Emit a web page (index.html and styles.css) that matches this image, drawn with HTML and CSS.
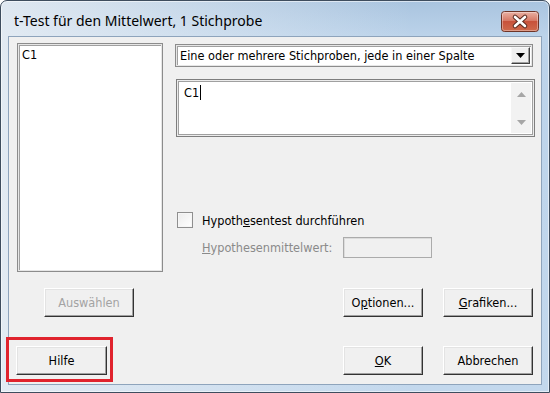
FILE: index.html
```html
<!DOCTYPE html>
<html lang="de">
<head>
<meta charset="utf-8">
<title>t-Test für den Mittelwert, 1 Stichprobe</title>
<link rel="stylesheet" href="styles.css">
</head>
<body>
<div class="window">
  <div class="titlebar">
    <span class="title">t-Test für den Mittelwert, 1 Stichprobe</span>
    <span class="close" aria-label="Schließen">
      <svg width="38" height="21" viewBox="0 0 38 21">
        <defs>
          <linearGradient id="cg" x1="0" y1="0" x2="0" y2="1">
            <stop offset="0" stop-color="#eab3a6"/>
            <stop offset="0.45" stop-color="#d77a66"/>
            <stop offset="0.5" stop-color="#c8523b"/>
            <stop offset="1" stop-color="#cf6b4d"/>
          </linearGradient>
        </defs>
        <rect x="0.5" y="0.5" width="37" height="20" rx="3" ry="3" fill="url(#cg)" stroke="#6e3427"/>
        <rect x="1.5" y="1.5" width="35" height="18" rx="2" ry="2" fill="none" stroke="rgba(255,255,255,0.35)"/>
        <path d="M14 6 L24 15 M24 6 L14 15" stroke="#5a2a20" stroke-width="4.6" stroke-linecap="round"/>
        <path d="M14 6 L24 15 M24 6 L14 15" stroke="#ffffff" stroke-width="2.6" stroke-linecap="round"/>
      </svg>
    </span>
  </div>
  <div class="client">
    <div class="main">
      <div class="listbox">C1</div>
      <div class="right">
        <div class="combo">
          <span class="combo-text">Eine oder mehrere Stichproben, jede in einer Spalte</span>
          <span class="combo-btn">
            <svg width="9" height="5" viewBox="0 0 9 5"><path d="M0 0 H9 L4.5 5 Z" fill="#000"/></svg>
          </span>
        </div>
        <div class="memo">
          <div class="memo-text">C1<span class="caret"></span></div>
          <div class="vscroll">
            <svg width="9" height="5" viewBox="0 0 9 5"><path d="M0 5 H9 L4.5 0 Z" fill="#a6a6a6"/></svg>
            <svg width="9" height="5" viewBox="0 0 9 5"><path d="M0 0 H9 L4.5 5 Z" fill="#a6a6a6"/></svg>
          </div>
        </div>
        <div class="check-row">
          <span class="checkbox"></span>
          <span class="check-label">Hypoth<u>e</u>sentest durchführen</span>
        </div>
        <div class="hyp-row">
          <span class="hyp-label"><u>H</u>ypothesenmittelwert:</span>
          <span class="hyp-input"></span>
        </div>
      </div>
    </div>
    <div class="btn-row row1">
      <span class="btn btn-sel disabled">Auswählen</span>
      <div class="btn-group">
        <span class="btn btn-opt">O<u>p</u>tionen...</span>
        <span class="btn btn-wide"><u>G</u>rafiken...</span>
      </div>
    </div>
    <div class="btn-row row2">
      <div class="hilfe-wrap">
        <span class="btn btn-hilfe">Hilfe</span>
      </div>
      <div class="btn-group">
        <span class="btn btn-opt"><u>O</u>K</span>
        <span class="btn btn-wide">Abbrechen</span>
      </div>
    </div>
  </div>
</div>
</body>
</html>
```
FILE: styles.css
```css
html, body {
  margin: 0;
  padding: 0;
  background: #ffffff;
}

.window {
  width: 550px;
  height: 393px;
  box-sizing: border-box;
  border: 1px solid #3e4d5e;
  border-radius: 7px 7px 0 0;
  background:
    linear-gradient(to right, rgba(232, 238, 244, 0.85) 0%, rgba(232, 238, 244, 0.35) 45%, rgba(232, 238, 244, 0) 75%),
    linear-gradient(to bottom, #a9c4df 0%, #bcd3ea 9%, #c3d8ed 100%);
  box-shadow: inset 0 0 0 1px rgba(255, 255, 255, 0.55);
  display: flex;
  flex-direction: column;
  overflow: hidden;
}

.titlebar {
  height: 35px;
  flex: 0 0 35px;
  display: flex;
  align-items: flex-start;
}

.title {
  font-family: "Noto Sans", "Open Sans", sans-serif;
  font-size: 14px;
  line-height: 20px;
  color: #000;
  padding: 10px 0 0 13px;
  white-space: nowrap;
}

.close {
  margin: 10px 10px 0 auto;
  width: 38px;
  height: 21px;
  display: block;
}
.close svg { display: block; }

.client {
  margin: 0 7px 0 7px;
  height: 349px;
  flex: 0 0 349px;
  box-sizing: border-box;
  border: 1px solid #8ea4bc;
  background: #f0f0f0;
  padding: 6px 8px 0 7px;
  font-family: "DejaVu Sans Condensed", "Liberation Sans", sans-serif;
  font-size: 12.6px;
  line-height: 15px;
  color: #000;
}

.main {
  display: flex;
  align-items: flex-start;
}

.listbox {
  margin-left: 1px;
  width: 146px;
  height: 229px;
  box-sizing: border-box;
  background: #fff;
  border: 1px solid #8c8c8c;
  box-shadow: inset 0 0 0 1px #e6e6e6, inset 1px 1px 0 1px #a0a0a0;
  padding: 3px 4px;
}

.right {
  margin-left: 12px;
  width: 358px;
  display: flex;
  flex-direction: column;
}

.combo {
  margin-top: 1px;
  height: 23px;
  box-sizing: border-box;
  background: #fff;
  border: 1px solid #8c8c8c;
  box-shadow: inset 0 0 0 1px #e6e6e6, inset 1px 1px 0 1px #a0a0a0;
  display: flex;
  align-items: center;
  padding: 0 2px 0 4px;
}

.combo-text {
  flex: 1;
  white-space: nowrap;
  overflow: hidden;
}

.combo-btn {
  width: 19px;
  height: 17px;
  box-sizing: border-box;
  background: #f0f0f0;
  border: 1px solid;
  border-color: #f8f8f8 #404040 #404040 #f8f8f8;
  box-shadow: inset -1px -1px 0 #a0a0a0;
  display: flex;
  align-items: center;
  justify-content: center;
}
.combo-btn svg { display: block; }

.memo {
  margin: 12px -2px 0 1px;
  height: 58px;
  box-sizing: border-box;
  background: #fff;
  border: 1px solid #7e7e7e;
  box-shadow: inset 0 0 0 1px #ececec, inset 0 0 0 2px #a0a0a0;
  padding: 3px;
  display: flex;
}

.memo-text {
  flex: 1;
  padding: 2px 4px 0 4px;
}

.caret {
  display: inline-block;
  width: 1px;
  height: 15px;
  background: #000;
  vertical-align: -3px;
  margin-left: 1px;
}

.vscroll {
  width: 20px;
  background: #f2f2f2;
  display: flex;
  flex-direction: column;
  align-items: center;
  justify-content: space-between;
  padding: 9px 0 8px;
  box-sizing: border-box;
}
.vscroll svg { display: block; }

.check-row {
  margin-top: 75px;
  height: 16px;
  display: flex;
  align-items: center;
}

.checkbox {
  margin-left: 2px;
  width: 16px;
  height: 16px;
  box-sizing: border-box;
  border: 1px solid #8f8f8f;
  background: linear-gradient(135deg, #ececec, #ffffff);
  box-shadow: inset 0 0 0 1px #f6f6f6;
}

.check-label {
  margin-left: 9px;
  white-space: nowrap;
}

.hyp-row {
  margin-top: 9px;
  height: 21px;
  display: flex;
  align-items: center;
  padding-left: 27px;
}

.hyp-label {
  flex: 0 0 141px;
  color: #8a8a8a;
  white-space: nowrap;
}

.hyp-input {
  width: 89px;
  height: 21px;
  box-sizing: border-box;
  border: 1px solid #ababab;
  background: #f0f0f0;
  box-shadow: inset 1px 1px 0 #dcdcdc;
}

.btn-row {
  display: flex;
  justify-content: space-between;
  align-items: flex-start;
}

.row1 { margin-top: 16px; }
.row2 { margin-top: 29px; }

.btn-group {
  display: flex;
  gap: 20px;
}

.btn {
  height: 29px;
  box-sizing: border-box;
  display: flex;
  align-items: center;
  justify-content: center;
  background: #f0f0f0;
  border: 1px solid;
  border-color: #ffffff #333333 #333333 #ffffff;
  box-shadow: inset -1px -1px 0 #a0a0a0, inset 1px 1px 0 #e3e3e3;
  white-space: nowrap;
}

.btn-sel {
  margin-left: 28px;
  width: 90px;
}

.disabled {
  color: #a3a3a3;
}

.btn-opt { width: 80px; }
.btn-wide { width: 90px; }
.btn-hilfe { width: 91px; }

.hilfe-wrap {
  position: relative;
}

.hilfe-wrap::after {
  content: "";
  position: absolute;
  left: -10px;
  top: -9px;
  right: -6px;
  bottom: -7px;
  border: 3px solid #e0232d;
}
```
